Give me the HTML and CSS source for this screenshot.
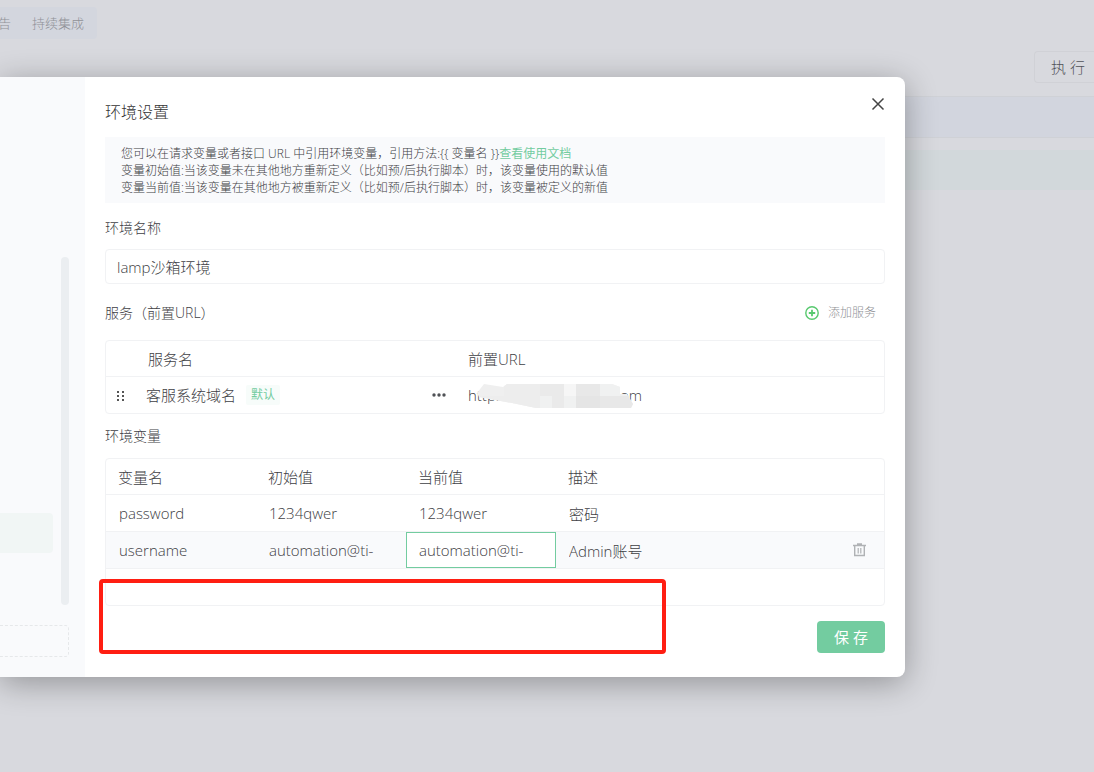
FILE: index.html
```html
<!DOCTYPE html>
<html lang="zh-CN">
<head>
<meta charset="utf-8">
<title>环境设置</title>
<link rel="stylesheet" href="styles.css">
</head>
<body>
<div class="page">
  <nav class="tabs">
    <a class="tab" href="#report">告</a>
    <a class="tab" href="#ci">持续集成</a>
  </nav>
  <div class="toolbar"><button class="run" type="button">执 行</button></div>
  <div class="band band-head"></div>
  <div class="band band-row"></div>
</div>

<div class="modal" role="dialog" aria-labelledby="dialog-title">
  <aside class="side">
    <div class="side-list">
      <div class="side-items"><div class="side-item"></div></div>
      <div class="side-scroll"></div>
    </div>
    <div class="side-add"></div>
  </aside>

  <main class="content">
    <header class="head">
      <h1 class="title" id="dialog-title">环境设置</h1>
      <button class="close" type="button" aria-label="关闭">
        <svg width="14" height="14" viewBox="0 0 14 14"><path d="M1.5 1.5l11 11M12.500 1.500l-11 11" stroke="#444" stroke-width="1.500" fill="none"/></svg>
      </button>
    </header>

    <div class="info">
      <p>您可以在请求变量或者接口 URL 中引用环境变量，引用方法:{{ 变量名 }}<a class="doc" href="#doc">查看使用文档</a></p>
      <p>变量初始值:当该变量未在其他地方重新定义（比如预/后执行脚本）时，该变量使用的默认值</p>
      <p>变量当前值:当该变量在其他地方被重新定义（比如预/后执行脚本）时，该变量被定义的新值</p>
    </div>

    <label class="label" for="env-name">环境名称</label>
    <input class="name" id="env-name" type="text" value="lamp沙箱环境">

    <div class="section">
      <h2 class="label">服务（前置URL）</h2>
      <button class="add" type="button">
        <svg width="14" height="14" viewBox="0 0 14 14" fill="none" stroke="#58c96f"><circle cx="7" cy="7" r="6.200" stroke-width="1.400"/><path d="M7 3.800v6.400M3.800 7h6.400" stroke-width="1.800"/></svg>
        添加服务
      </button>
    </div>

    <table class="grid services">
      <colgroup><col class="c-drag"><col class="c-service"><col></colgroup>
      <thead><tr><th></th><th>服务名</th><th>前置URL</th></tr></thead>
      <tbody>
        <tr>
          <td class="drag"><svg width="8" height="12" viewBox="0 0 8 12" fill="#555"><path d="M0 1h2v2H0zM5 1h2v2H5zM0 5h2v2H0zM5 5h2v2H5zM0 9h2v2H0zM5 9h2v2H5z"/></svg></td>
          <td>
            <div class="service">
              <span>客服系统域名</span><span class="tag">默认</span>
              <button class="more" type="button" aria-label="更多"><svg width="14" height="4" viewBox="0 0 14 4" fill="#505256"><circle cx="2" cy="2" r="1.700"/><circle cx="7" cy="2" r="1.700"/><circle cx="12" cy="2" r="1.700"/></svg></button>
            </div>
          </td>
          <td>
            <div class="url"><span>http://</span><span>com</span>
              <svg class="mosaic" width="158" height="26" viewBox="0 0 158 26">
                <clipPath id="blob"><path d="M8 0L27 3L31 0H136L144 3V10H151L157 20L155 24H60L36 19L3 13L1 9z"/></clipPath>
                <g clip-path="url(#blob)">
                  <path fill="#efefef" d="M0 0h158v26H0z"/>
                  <path fill="#ededed" d="M28 0h36v12H28zM4 12h60v14H4z"/>
                  <path fill="#eaeaea" d="M64 0h24v12H64zM76 12h12v14H76z"/>
                  <path fill="#f6f6f6" d="M88 0h12v12H88z"/>
                  <path fill="#e8e8e8" d="M100 0h24v12h-24zM124 12h34v14h-34z"/>
                  <path fill="#f0f1f1" d="M64 12h12v14H64zM88 12h12v14H88zM124 0h20v12h-20z"/>
                  <path fill="#e5e5e5" d="M100 12h24v14h-24z"/>
                </g>
              </svg>
            </div>
          </td>
        </tr>
      </tbody>
    </table>

    <h2 class="label">环境变量</h2>
    <table class="grid vars">
      <colgroup><col class="c-var"><col class="c-var"><col class="c-var"><col><col class="c-del"></colgroup>
      <thead><tr><th>变量名</th><th>初始值</th><th>当前值</th><th>描述</th><th></th></tr></thead>
      <tbody>
        <tr>
          <td><input class="cell" aria-label="变量名" value="password"></td>
          <td><input class="cell" aria-label="初始值" value="1234qwer"></td>
          <td><input class="cell" aria-label="当前值" value="1234qwer"></td>
          <td><input class="cell" aria-label="描述" value="密码"></td>
          <td></td>
        </tr>
        <tr class="active">
          <td><input class="cell" aria-label="变量名" value="username"></td>
          <td><input class="cell" aria-label="初始值" value="automation@ti-"></td>
          <td><input class="cell cell-focus" aria-label="当前值" value="automation@ti-"></td>
          <td><input class="cell" aria-label="描述" value="Admin账号"></td>
          <td><button class="del" type="button" aria-label="删除"><svg width="13" height="14" viewBox="0 0 13 14" fill="none" stroke="#b0b2b5"><path d="M0 2.500h13M4 1h5" stroke-width="1.600"/><path d="M1.700 3v9.500h9.600V3" stroke-width="1.400"/><path d="M5.200 5v5.500M7.800 5v5.500" stroke-width="1.200"/></svg></button></td>
        </tr>
        <tr><td></td><td></td><td></td><td></td><td></td></tr>
      </tbody>
    </table>

    <footer class="foot"><button class="save" type="button">保 存</button></footer>
  </main>
  <div class="highlight"></div>
</div>
</body>
</html>
```
FILE: styles.css
```css
* { box-sizing: border-box; }

body {
  margin: 0;
  min-height: 100vh;
  background: #d8d9de;
  color: #3e4044;
  font: 300 15px/20px "Open Sans", "Noto Sans CJK SC", sans-serif;
  overflow: hidden;
}

button, input { font: inherit; color: inherit; }
button { padding: 0; border: 0; background: none; }
h1, h2, p { margin: 0; font-weight: inherit; }
svg { display: block; }

.page { padding-top: 7px; }

.tabs {
  display: flex;
  gap: 21px;
  width: fit-content;
  height: 32px;
  padding-right: 13px;
  align-items: center;
  background: #d3d6de;
  border-radius: 0 4px 4px 0;
}

.tab {
  color: #909298;
  font-size: 13px;
  text-decoration: none;
}

.tab:first-child { margin-left: -2px; }

.toolbar {
  display: flex;
  justify-content: flex-end;
  padding: 12px 0 13px;
}

.run {
  width: 60px;
  height: 32px;
  padding-left: 16px;
  border: 1px solid #d0d1d6;
  border-right: 0;
  border-radius: 4px 0 0 4px;
  color: #505258;
  text-align: left;
  white-space: nowrap;
}

.band-head {
  height: 42px;
  background: #d2d5de;
  border: solid #cfd1d6;
  border-width: 1px 0;
}

.band-row {
  height: 40px;
  margin-top: 12px;
  background: #d2d8db;
}

.modal {
  position: absolute;
  top: 77px;
  left: 0;
  right: 189px;
  display: flex;
  background: #fff;
  border-radius: 0 8px 8px 0;
  box-shadow: 0 6px 32px rgba(0, 0, 0, .32);
}

.side {
  display: flex;
  flex: 0 0 85px;
  flex-direction: column;
  gap: 20px;
  padding: 0 16px 20px 0;
  background: #f9fafc;
}

.side-list {
  display: flex;
  flex: 1;
  align-items: flex-end;
  gap: 8px;
}

.side-items { flex: 1; padding-bottom: 52px; }

.side-item {
  height: 40px;
  background: #f1f6f5;
  border-radius: 0 4px 4px 0;
}

.side-scroll {
  width: 8px;
  height: 66%;
  background: #ebeef1;
  border-radius: 4px;
}

.side-add {
  height: 32px;
  border: 1px dashed #e6e8ea;
  border-left: 0;
  border-radius: 0 4px 4px 0;
}

.content {
  flex: 1;
  min-width: 0;
  padding: 20px 20px 24px;
}

.head {
  display: flex;
  align-items: flex-start;
  justify-content: space-between;
  height: 40px;
}

.title {
  padding-top: 5px;
  color: #333;
  font-size: 16px;
}

.close { padding: 0; }

.info {
  padding: 8px 16px 7px;
  background: #f9fafc;
  font-size: 12px;
  line-height: 17px;
}

.doc {
  color: #73cca0;
  font-weight: 400;
  text-decoration: none;
}

.label {
  display: block;
  margin: 12px 0;
  font-size: 14px;
}

.info + .label { margin-top: 15px; margin-bottom: 11px; }

.name {
  display: block;
  width: 100%;
  height: 35px;
  padding: 0 11px;
  border: 1px solid #f1f2f4;
  border-radius: 4px;
  background: #fff;
}

.section {
  display: flex;
  align-items: center;
  justify-content: space-between;
  padding: 7px 9px 5px 0;
}

.add {
  display: flex;
  align-items: center;
  gap: 9px;
  color: #909296;
  font-size: 12px;
}

.grid {
  width: 100%;
  table-layout: fixed;
  border: 1px solid #f1f2f4;
  border-radius: 4px;
  border-spacing: 0;
}

.grid th, .grid td {
  height: 37px;
  padding: 0;
  border-bottom: 1px solid #f1f2f4;
  font-weight: inherit;
  text-align: left;
}

.grid th { height: 36px; }
.grid tbody tr:last-child td { height: 36px; border-bottom: 0; }

.c-drag { width: 40px; }
.c-service { width: 322px; }
.c-var { width: 150px; }
.c-del { width: 50px; }

.services th:nth-child(2) { padding-left: 2px; }
.services .drag { padding: 2px 0 0 11px; }

.service {
  display: flex;
  align-items: center;
  gap: 10px;
  padding-right: 22px;
}

.tag {
  padding: 0 5px;
  background: #f7fcfa;
  border-radius: 2px;
  color: #73cca0;
  font-size: 12px;
  font-weight: 400;
}

.more { margin-left: auto; }

.url {
  position: relative;
  display: flex;
  justify-content: space-between;
  width: 174px;
}

.mosaic {
  position: absolute;
  top: -1px;
  left: 8px;
}

.vars th { padding-left: 12px; }

.active { background: #f9fafc; }

.cell {
  display: block;
  width: 100%;
  height: 36px;
  padding: 0 12px;
  border: 1px solid transparent;
  outline: 0;
  background: transparent;
}

.cell-focus {
  border-color: #73cca0;
  background: #fff;
}

.del { display: block; margin-left: 19px; }

.foot {
  display: flex;
  justify-content: flex-end;
  margin-top: 15px;
}

.save {
  width: 68px;
  height: 32px;
  background: #73cca0;
  border-radius: 4px;
  color: #fff;
  font-weight: 400;
}

/* Callout frame drawn over the empty rows of the variables table. */
.highlight {
  position: absolute;
  top: 502px;
  left: 99px;
  width: 567px;
  height: 75px;
  border: 4px solid #ff1e12;
  border-radius: 4px;
}
```
